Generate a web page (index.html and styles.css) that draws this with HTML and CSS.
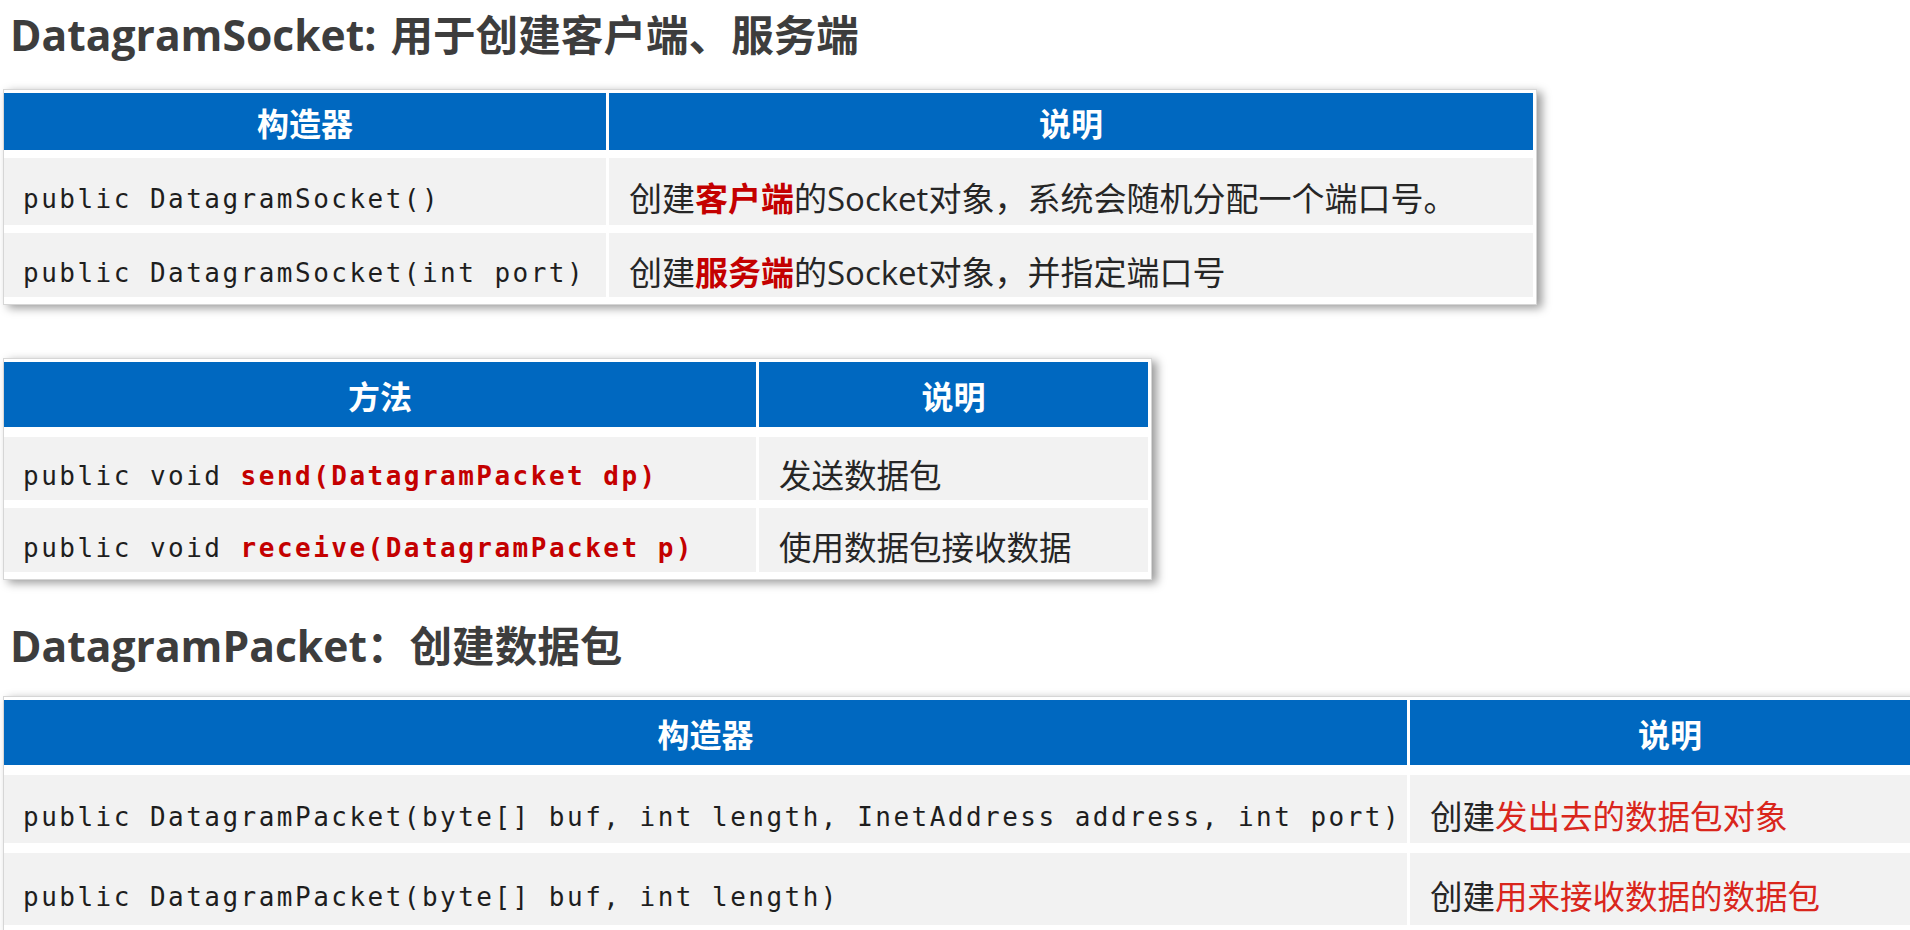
FILE: index.html
```html
<!DOCTYPE html>
<html lang="zh-CN">
<head>
<meta charset="utf-8">
<title>DatagramSocket / DatagramPacket</title>
<link rel="stylesheet" href="styles.css">
</head>
<body>
<main class="page">
  <h1 class="title">DatagramSocket: 用于创建客户端、服务端</h1>

  <section class="tbl t1">
    <div class="th">构造器</div>
    <div class="th">说明</div>
    <div class="td code"><span>public DatagramSocket()</span></div>
    <div class="td desc"><span>创建<b class="hl">客户端</b>的Socket对象，系统会随机分配一个端口号。</span></div>
    <div class="td code"><span>public DatagramSocket(int port)</span></div>
    <div class="td desc"><span>创建<b class="hl">服务端</b>的Socket对象，并指定端口号</span></div>
  </section>

  <section class="tbl t2">
    <div class="th">方法</div>
    <div class="th">说明</div>
    <div class="td code"><span>public void <b class="hl">send(DatagramPacket dp)</b></span></div>
    <div class="td desc"><span>发送数据包</span></div>
    <div class="td code"><span>public void <b class="hl">receive(DatagramPacket p)</b></span></div>
    <div class="td desc"><span>使用数据包接收数据</span></div>
  </section>

  <h1 class="title title2">DatagramPacket：创建数据包</h1>

  <section class="tbl t3">
    <div class="th">构造器</div>
    <div class="th">说明</div>
    <div class="td code"><span>public DatagramPacket(byte[] buf, int length, InetAddress address, int port)</span></div>
    <div class="td desc"><span>创建<span class="red">发出去的数据包对象</span></span></div>
    <div class="td code"><span>public DatagramPacket(byte[] buf, int length)</span></div>
    <div class="td desc"><span>创建<span class="red">用来接收数据的数据包</span></span></div>
  </section>
</main>
</body>
</html>
```

FILE: styles.css
```css
html, body {
  margin: 0;
  padding: 0;
  background: #ffffff;
}

body {
  width: 1910px;
  height: 930px;
  overflow: hidden;
}

.page {
  display: flex;
  flex-direction: column;
  align-items: flex-start;
}

.title {
  margin: 4px 0 0 10px;
  font-family: "Open Sans", "Noto Sans CJK SC", sans-serif;
  font-weight: 700;
  font-size: 42.6px;
  line-height: 60px;
  word-spacing: 3px;
  color: #3d3d3d;
  white-space: nowrap;
}

.title2 {
  margin-top: 35px;
}

.tbl {
  display: grid;
  column-gap: 3px;
  row-gap: 8px;
  margin-left: 3px;
  padding: 3px 3px 7px 0;
  border: 1px solid #d6d6d6;
  background: #ffffff;
  box-shadow: 5px 3px 9px rgba(0, 0, 0, 0.4);
}

.t1 {
  margin-top: 25px;
  grid-template-columns: 602px 924px;
}

.t2 {
  margin-top: 53px;
  grid-template-columns: 752px 389px;
}

.t3 {
  margin-top: 21px;
  grid-template-columns: 1403px 520px;
}

.th {
  display: flex;
  align-items: center;
  justify-content: center;
  background: #0068c0;
  color: #ffffff;
  font-family: "Noto Sans CJK SC", sans-serif;
  font-weight: 700;
  font-size: 32px;
  height: 57px;
}

.t2 .th,
.t3 .th {
  height: 65px;
  margin-bottom: 2px;
}

.td {
  display: flex;
  align-items: center;
  box-sizing: border-box;
  padding: 11px 0 0 19px;
  background: #f2f2f2;
  color: #262626;
  white-space: nowrap;
}

.t1 .td:nth-child(3),
.t1 .td:nth-child(4) { height: 67px; }
.t1 .td:nth-child(5),
.t1 .td:nth-child(6) { height: 64px; }

.t2 .td:nth-child(3),
.t2 .td:nth-child(4) { height: 63px; }
.t2 .td:nth-child(5),
.t2 .td:nth-child(6) { height: 64px; }

.t3 .td:nth-child(3),
.t3 .td:nth-child(4) { height: 68px; margin-bottom: 2px; }
.t3 .td:nth-child(5),
.t3 .td:nth-child(6) { height: 72px; }

.code {
  font-family: "DejaVu Sans Mono", monospace;
  font-size: 26px;
  letter-spacing: 2.48px;
  color: #1e1e1e;
  padding-top: 15px;
}

.desc {
  font-family: "Open Sans", "Noto Sans CJK SC", sans-serif;
  font-size: 32.5px;
  padding-left: 20px;
}

.t1 .desc {
  font-size: 33px;
}

.hl {
  color: #c40000;
  font-weight: 700;
}

.red {
  color: #d9261c;
}
```
